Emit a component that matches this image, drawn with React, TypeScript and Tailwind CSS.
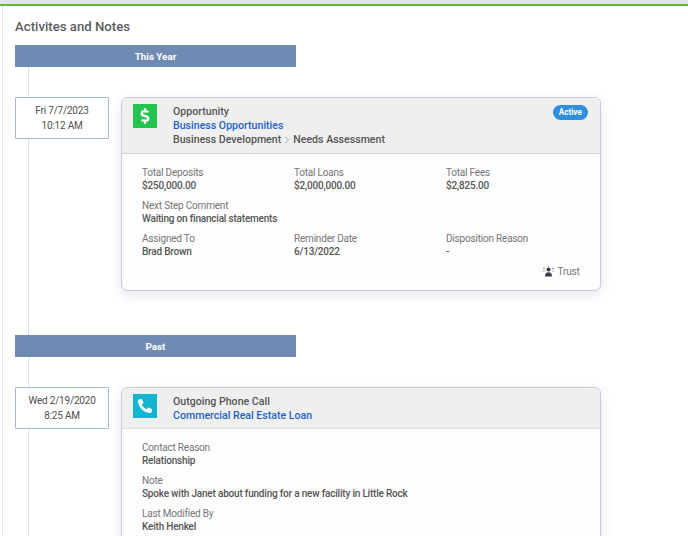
import { ChevronRight } from "lucide-react";
import { FaDollarSign, FaPhoneAlt } from "react-icons/fa";

function Band({ label }: { label: string }) {
  return (
    <div className="relative z-10 flex h-[22px] w-[281px] items-center justify-center bg-[#6f8bb3] pt-[2.5px] text-[9.8px] font-bold text-white">
      {label}
    </div>
  );
}

function DateBox({ day, time }: { day: string; time: string }) {
  return (
    <div className="relative z-10 flex h-[42px] w-[94px] shrink-0 flex-col items-center justify-center rounded-[1px] border-[1.5px] border-[#a8bad3] bg-white pt-[1px] text-[10px] leading-[14.7px] tracking-[-0.02em] text-[#4f4f4f]">
      <div>{day}</div>
      <div>{time}</div>
    </div>
  );
}

function Field({ label, value }: { label: string; value: string }) {
  return (
    <div className="text-[10px] leading-[13px] tracking-[-0.02em]">
      <div className="text-[#757575]">{label}</div>
      <div className="font-medium text-[#555]">{value}</div>
    </div>
  );
}

function TrustIcon() {
  return (
    <svg width="13" height="11" viewBox="0 0 13 11" className="text-[#3d3d4a]">
      <circle cx="6.5" cy="3.6" r="2" fill="currentColor" />
      <path d="M3 10.5 C3 7.4 4.4 6.2 6.5 6.2 C8.6 6.2 10 7.4 10 10.5 Z" fill="currentColor" />
      <circle cx="2" cy="2.4" r="1" fill="#a5a5a5" />
      <circle cx="11" cy="2.4" r="1" fill="#a5a5a5" />
      <circle cx="6.5" cy="0.7" r="0.7" fill="#a5a5a5" />
      <path d="M0 5.6 C0 4.4 3.4 4.4 3.4 5.6 Z" fill="#a5a5a5" />
      <path d="M9.6 5.6 C9.6 4.4 13 4.4 13 5.6 Z" fill="#a5a5a5" />
    </svg>
  );
}

export default function App() {
  return (
    <div className="h-[536px] w-[688px] overflow-hidden bg-white font-['Roboto',sans-serif]">
      <div className="h-[4px] bg-[#e4e4e4]" />
      <div className="h-[2px] bg-[#6cb244]" />
      <div className="relative ml-[2px] h-[530px] border-l border-[#dfe1ec] pl-[12px]">
        <div className="absolute top-[40px] bottom-0 left-[25px] w-px bg-[#d8deea]" />

        <h1 className="pt-[12px] text-[13.2px] leading-[17px] font-medium text-[#5c5c5c]">Activites and Notes</h1>

        <div className="mt-[10px]">
          <Band label="This Year" />
        </div>

        <div className="mt-[30px] flex items-start gap-3">
          <DateBox day="Fri 7/7/2023" time="10:12 AM" />
          <div className="h-[194px] w-[480px] overflow-hidden rounded-[6px] border-[1.5px] border-[#c8cbdc] bg-[#fdfdfe] shadow-[0_4px_12px_rgba(60,60,90,0.12)]">
            <div className="flex h-[56px] gap-[16px] border-b-[1.5px] border-[#d4d5dc] bg-[#efeff0] pt-[6px] pl-[11px]">
              <div className="flex h-6 w-6 shrink-0 items-center justify-center bg-[#22c34f] text-white">
                <FaDollarSign size={16} />
              </div>
              <div className="flex-1 pt-[0.5px] text-[10.6px] leading-[14.2px] font-medium text-[#555]">
                <div>Opportunity</div>
                <div className="text-[#1f62c4]">Business Opportunities</div>
                <div className="flex items-center">
                  Business Development
                  <ChevronRight size={12} className="text-[#aaa]" />
                  <span>Needs Assessment</span>
                </div>
              </div>
              <div className="mt-[0.5px] mr-[12px] flex h-[15.5px] w-[35.5px] items-center justify-center self-start rounded-full bg-[#2f8fe0] text-[8.2px] font-bold text-white">
                Active
              </div>
            </div>
            <div className="px-[20px] pt-[11.5px]">
              <div className="grid grid-cols-[152px_152px_1fr]">
                <Field label="Total Deposits" value="$250,000.00" />
                <Field label="Total Loans" value="$2,000,000.00" />
                <Field label="Total Fees" value="$2,825.00" />
              </div>
              <div className="mt-[7px]">
                <Field label="Next Step Comment" value="Waiting on financial statements" />
              </div>
              <div className="mt-[7px] grid grid-cols-[152px_152px_1fr]">
                <Field label="Assigned To" value="Brad Brown" />
                <Field label="Reminder Date" value="6/13/2022" />
                <Field label="Disposition Reason" value="-" />
              </div>
              <div className="mt-[7px] flex items-center justify-end gap-[3px] pr-[0.5px] text-[10px] leading-[13px] tracking-[-0.02em] text-[#757575]">
                <TrustIcon />
                Trust
              </div>
            </div>
          </div>
        </div>

        <div className="mt-[44px]">
          <Band label="Past" />
        </div>

        <div className="mt-[30px] flex items-start gap-3">
          <DateBox day="Wed 2/19/2020" time="8:25 AM" />
          <div className="h-[194px] w-[480px] overflow-hidden rounded-[6px] border-[1.5px] border-[#c8cbdc] bg-[#fdfdfe] shadow-[0_4px_12px_rgba(60,60,90,0.12)]">
            <div className="flex h-[41px] gap-[16px] border-b-[1.5px] border-[#dddde2] bg-[#efeff0] pt-[6px] pl-[11px]">
              <div className="flex h-6 w-6 shrink-0 items-center justify-center bg-[#10b5cf] text-white">
                <FaPhoneAlt size={14} />
              </div>
              <div className="flex-1 pt-[0.5px] text-[10.6px] leading-[14.2px] font-medium text-[#555]">
                <div>Outgoing Phone Call</div>
                <div className="text-[#1f62c4]">Commercial Real Estate Loan</div>
              </div>
            </div>
            <div className="px-[20px] pt-[12px]">
              <Field label="Contact Reason" value="Relationship" />
              <div className="mt-[7px]">
                <Field label="Note" value="Spoke with Janet about funding for a new facility in Little Rock" />
              </div>
              <div className="mt-[7px]">
                <Field label="Last Modified By" value="Keith Henkel" />
              </div>
            </div>
          </div>
        </div>
      </div>
    </div>
  );
}
